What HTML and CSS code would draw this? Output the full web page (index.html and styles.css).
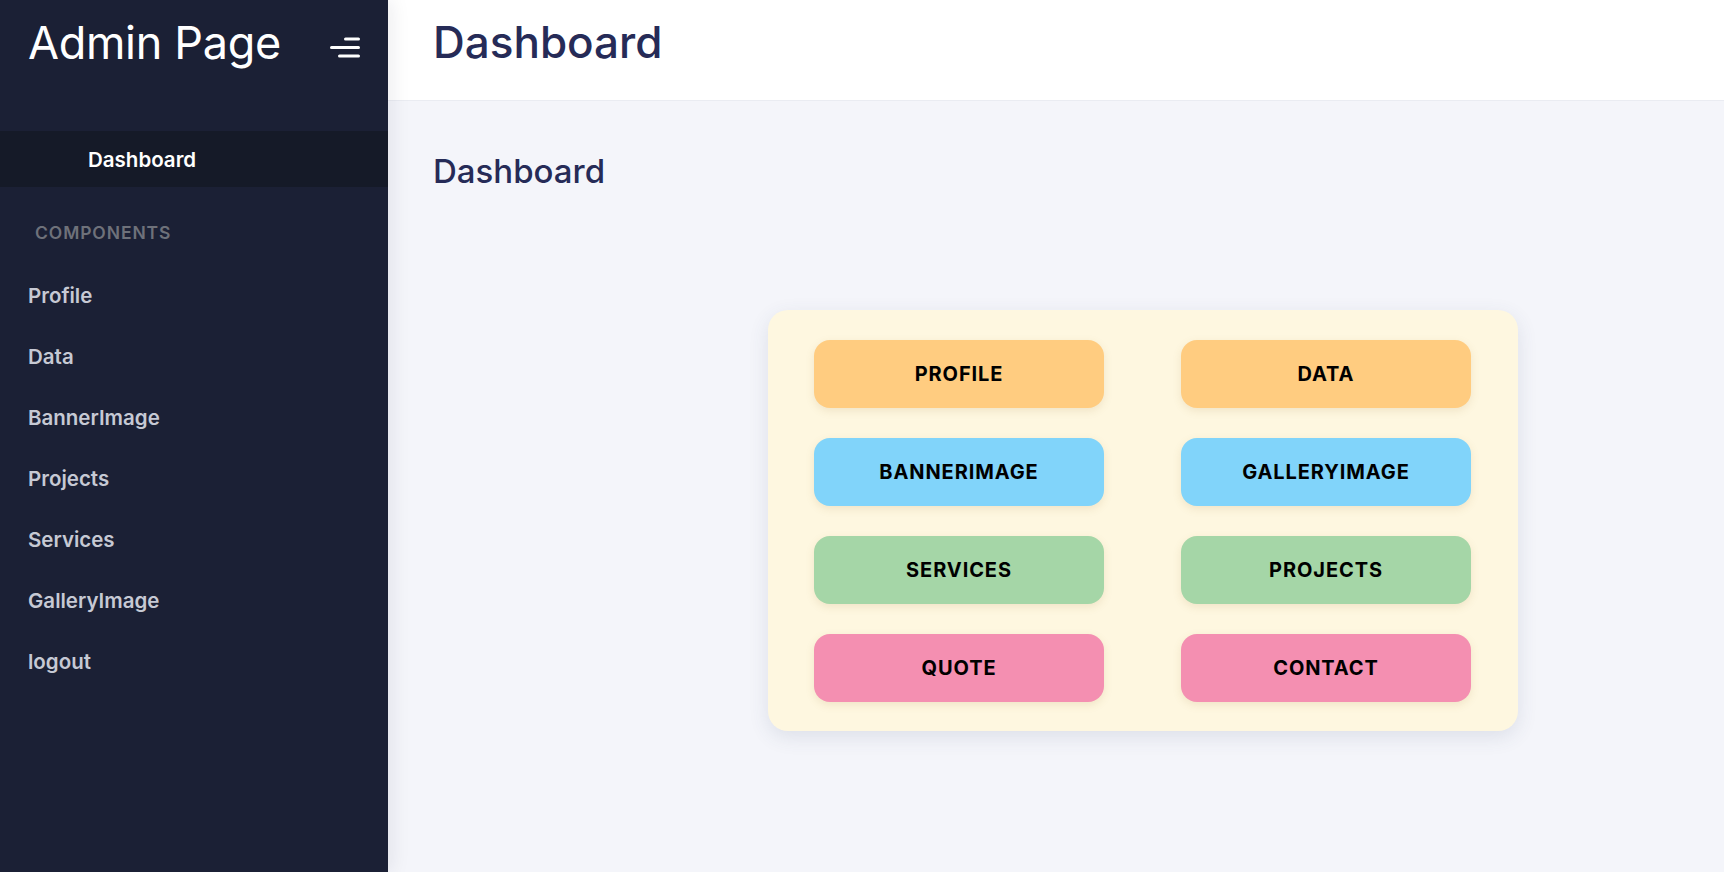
FILE: index.html
```html
<!DOCTYPE html>
<html>
<head>
<meta charset="utf-8">
<link rel="stylesheet" href="styles.css">
</head>
<body>
<aside class="sidebar">
  <div class="brand">
    <span class="brand-title">Admin Page</span>
    <svg class="menu-icon" width="32" height="24" viewBox="0 0 32 24">
      <line x1="17.5" y1="4" x2="30.5" y2="4" stroke="#fff" stroke-width="3" stroke-linecap="round"/>
      <line x1="3.5" y1="12.5" x2="30.5" y2="12.5" stroke="#fff" stroke-width="3" stroke-linecap="round"/>
      <line x1="11.5" y1="21" x2="30.5" y2="21" stroke="#fff" stroke-width="3" stroke-linecap="round"/>
    </svg>
  </div>
  <div class="nav-active">Dashboard</div>
  <div class="nav-section">COMPONENTS</div>
  <nav class="nav-list">
    <a class="nav-item">Profile</a>
    <a class="nav-item">Data</a>
    <a class="nav-item">BannerImage</a>
    <a class="nav-item">Projects</a>
    <a class="nav-item">Services</a>
    <a class="nav-item">GalleryImage</a>
    <a class="nav-item">logout</a>
  </nav>
</aside>
<main class="main">
  <header class="topbar"><h1 class="topbar-title">Dashboard</h1></header>
  <section class="content">
    <h2 class="page-title">Dashboard</h2>
    <div class="card">
      <div class="tile orange">PROFILE</div>
      <div class="tile orange">DATA</div>
      <div class="tile blue">BANNERIMAGE</div>
      <div class="tile blue">GALLERYIMAGE</div>
      <div class="tile green">SERVICES</div>
      <div class="tile green">PROJECTS</div>
      <div class="tile pink">QUOTE</div>
      <div class="tile pink">CONTACT</div>
    </div>
  </section>
</main>
</body>
</html>
```

FILE: styles.css
```css
* { box-sizing: border-box; }
html, body { margin: 0; height: 100%; }
body {
  display: flex;
  font-family: "Inter", "Liberation Sans", sans-serif;
  background: #f4f5fa;
  overflow: hidden;
}
.sidebar {
  width: 388px;
  flex: none;
  height: 872px;
  background: #1b2035;
  position: relative;
  z-index: 2;
  box-shadow: 4px 0 18px rgba(20, 25, 45, 0.08);
}
.brand {
  height: 131px;
  display: flex;
  align-items: flex-start;
  justify-content: space-between;
  padding: 12px 28px 0 28px;
}
.brand-title {
  color: #ffffff;
  font-size: 45px;
  font-weight: 400;
  line-height: 62px;
  letter-spacing: -0.3px;
}
.menu-icon { margin-top: 23px; }
.nav-active {
  height: 56px;
  background: #151a28;
  color: #ffffff;
  font-size: 20.5px;
  font-weight: 600;
  padding-left: 88px;
  display: flex;
  align-items: center;
}
.nav-section {
  color: #6e717a;
  font-size: 17.5px;
  font-weight: 600;
  letter-spacing: 0.9px;
  padding: 36px 0 0 35px;
  line-height: 20px;
}
.nav-list {
  display: flex;
  flex-direction: column;
  padding-top: 22px;
}
.nav-item {
  color: #c6c9d4;
  font-size: 20.5px;
  font-weight: 600;
  padding-left: 28px;
  height: 61px;
  display: flex;
  align-items: center;
}
.main {
  flex: 1;
  display: flex;
  flex-direction: column;
  min-width: 0;
}
.topbar {
  height: 101px;
  flex: none;
  background: #ffffff;
  border-bottom: 1px solid #eaecf2;
  padding-left: 45px;
  display: flex;
  align-items: center;
}
.topbar-title {
  margin: 0;
  color: #262b57;
  font-size: 44px;
  font-weight: 500;
  margin-top: -16px;
}
.content {
  padding: 0 45px;
}
.page-title {
  margin: 48px 0 0 0;
  color: #262b57;
  font-size: 33px;
  font-weight: 500;
  line-height: 44px;
}
.card {
  margin: 117px 0 0 335px;
  width: 750px;
  background: #fef7e0;
  border-radius: 20px;
  padding: 30px 46px 29px 46px;
  display: grid;
  grid-template-columns: 290px 290px;
  column-gap: 77px;
  row-gap: 30px;
  box-shadow: 0 6px 20px rgba(60, 70, 110, 0.12);
}
.tile {
  height: 68px;
  border-radius: 16px;
  display: flex;
  align-items: center;
  justify-content: center;
  font-size: 20px;
  font-weight: 700;
  color: #000;
  letter-spacing: 0.9px;
  box-shadow: 0 3px 8px rgba(160, 130, 60, 0.15);
}
.orange { background: #ffcc80; }
.blue { background: #81d4fa; }
.green { background: #a5d6a7; }
.pink { background: #f48fb1; }
```
